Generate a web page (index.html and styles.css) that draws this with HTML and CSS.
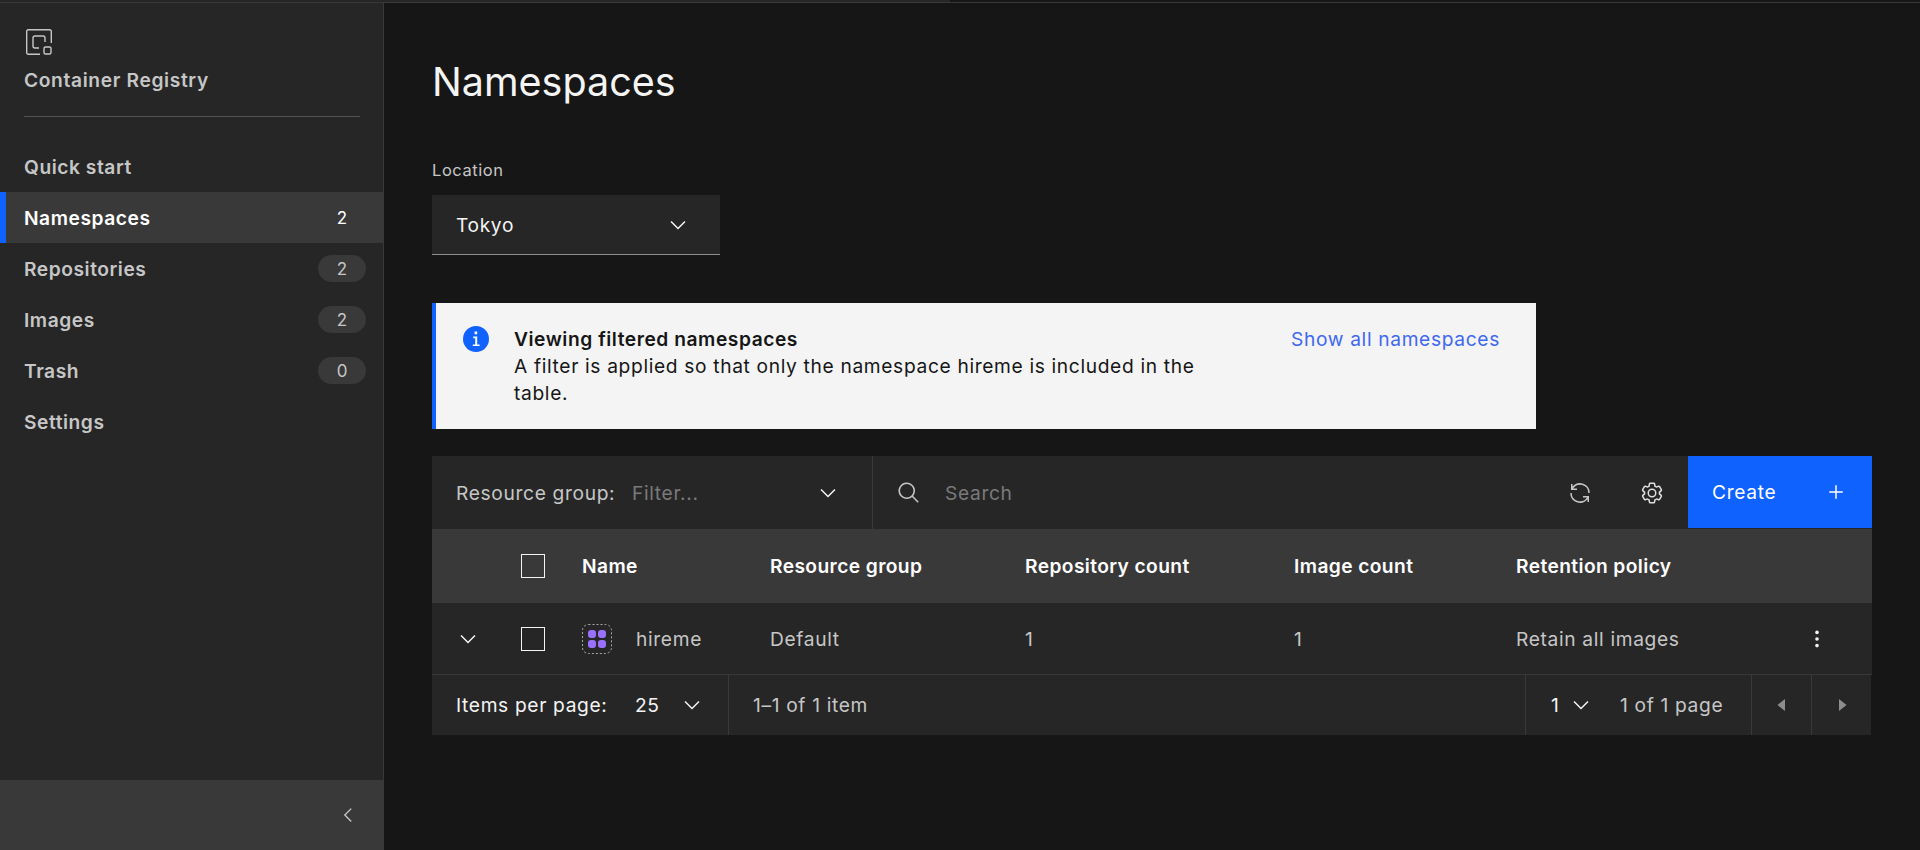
FILE: index.html
```html
<!DOCTYPE html>
<html lang="en">
<head>
<meta charset="utf-8">
<title>Namespaces</title>
<link rel="stylesheet" href="styles.css">
</head>
<body>
<div class="topline"><div class="topline-bar"></div></div>
<div class="app">
  <aside class="sidebar">
    <div class="brand">
      <svg class="brand-icon" viewBox="0 0 26 26" fill="none" stroke="#c6c6c6" stroke-width="1.4"><path d="M14 25.3H2.2a1.5 1.5 0 0 1-1.5-1.5V2.2A1.5 1.5 0 0 1 2.2.7h21.6a1.5 1.5 0 0 1 1.5 1.5V14"/><path d="M13 19H9a2 2 0 0 1-2-2V9a2 2 0 0 1 2-2h8a2 2 0 0 1 2 2v4"/><rect x="18" y="18" width="7" height="7" rx="1.5"/></svg>
      <div class="brand-name">Container Registry</div>
    </div>
    <nav class="nav">
      <a class="nav-item">Quick start</a>
      <a class="nav-item active">Namespaces<span class="badge plain">2</span></a>
      <a class="nav-item">Repositories<span class="badge">2</span></a>
      <a class="nav-item">Images<span class="badge">2</span></a>
      <a class="nav-item">Trash<span class="badge">0</span></a>
      <a class="nav-item">Settings</a>
    </nav>
    <div class="collapse">
      <svg class="icon-18" viewBox="0 0 32 32" fill="#c6c6c6"><path d="M10 16 20 6l1.4 1.4L12.8 16l8.6 8.6L20 26z"/></svg>
    </div>
  </aside>
  <main class="main">
    <h1 class="title">Namespaces</h1>
    <label class="field-label">Location</label>
    <div class="location">
      <span>Tokyo</span>
      <svg class="icon-20" viewBox="0 0 32 32" fill="#f4f4f4"><path d="M16 22 6 12l1.4-1.4 8.6 8.6 8.6-8.6L26 12z"/></svg>
    </div>
    <section class="notice">
      <svg class="notice-icon" viewBox="0 0 26 26"><circle cx="13" cy="13" r="13" fill="#0f62fe"/><path fill="#fff" d="M11.6 5.4h2.6v2.8h-2.6zM9.8 18.4h2.4v-6.2h-2v-1.6h4v7.8h2.4V20H9.8z"/></svg>
      <div class="notice-text">
        <strong>Viewing filtered namespaces</strong>
        <p>A filter is applied so that only the namespace hireme is included in the table.</p>
      </div>
      <a class="notice-link">Show all namespaces</a>
    </section>
    <section class="table">
      <div class="toolbar">
        <div class="rg-filter">
          <span class="rg-label">Resource group:</span>
          <span class="placeholder">Filter...</span>
          <svg class="icon-20 rg-chev" viewBox="0 0 32 32" fill="#f4f4f4"><path d="M16 22 6 12l1.4-1.4 8.6 8.6 8.6-8.6L26 12z"/></svg>
        </div>
        <div class="search">
          <svg class="icon-22" viewBox="0 0 32 32" fill="#c6c6c6"><path d="m29 27.586-7.552-7.552a11.018 11.018 0 1 0-1.414 1.414L27.586 29ZM4 13a9 9 0 1 1 9 9 9.01 9.01 0 0 1-9-9Z"/></svg>
          <span class="placeholder">Search</span>
        </div>
        <div class="tool">
          <svg class="icon-22" viewBox="0 0 32 32" fill="#c6c6c6"><path d="M12 10H6.78A11 11 0 0 1 27 16h2A13 13 0 0 0 6 7.68V4H4v8h8zM20 22h5.22A11 11 0 0 1 5 16H3a13 13 0 0 0 23 8.32V28h2V20H20z"/></svg>
        </div>
        <div class="tool">
          <svg class="icon-22" viewBox="0 0 32 32" fill="#e0e0e0"><path d="M27 16.76v-1.53l1.92-1.68A2 2 0 0 0 29.3 11L27 7a2 2 0 0 0-1.73-1 2 2 0 0 0-.64.1l-2.43.82a11.35 11.35 0 0 0-1.31-.75l-.51-2.52a2 2 0 0 0-2-1.61h-4.76a2 2 0 0 0-2 1.61l-.51 2.52a11.48 11.48 0 0 0-1.32.75L7.43 6.06A2 2 0 0 0 6.79 6 2 2 0 0 0 5 7l-2.3 4a2 2 0 0 0 .41 2.51L5 15.24v1.53l-1.89 1.68A2 2 0 0 0 2.7 21L5 25a2 2 0 0 0 1.73 1 2 2 0 0 0 .64-.1l2.43-.82a11.35 11.35 0 0 0 1.31.75l.51 2.52a2 2 0 0 0 2 1.61h4.72a2 2 0 0 0 2-1.61l.51-2.52a11.48 11.48 0 0 0 1.32-.75l2.42.82a2 2 0 0 0 .64.1 2 2 0 0 0 1.73-1l2.34-4a2 2 0 0 0-.41-2.51ZM25.23 24l-3.43-1.16a8.86 8.86 0 0 1-2.71 1.57L18.38 28h-4.74l-.71-3.55a9.36 9.36 0 0 1-2.7-1.57L6.79 24l-2.37-4 2.72-2.4a8.9 8.9 0 0 1 0-3.13L4.42 12l2.37-4 3.43 1.16a8.86 8.86 0 0 1 2.71-1.57L13.64 4h4.72l.71 3.55a9.36 9.36 0 0 1 2.7 1.57L25.23 8l2.37 4-2.72 2.4a8.9 8.9 0 0 1 0 3.13L27.6 20Z"/><path d="M16 22a6 6 0 1 1 6-6 5.94 5.94 0 0 1-6 6Zm0-10a3.91 3.91 0 0 0-4 4 3.91 3.91 0 0 0 4 4 3.91 3.91 0 0 0 4-4 3.91 3.91 0 0 0-4-4Z"/></svg>
        </div>
        <button class="create"><span>Create</span><svg class="icon-20" viewBox="0 0 32 32" fill="#fff"><path d="M17 15V7h-2v8H7v2h8v8h2v-8h8v-2z"/></svg></button>
      </div>
      <div class="grid head">
        <div></div>
        <div class="check"></div>
        <div>Name</div>
        <div>Resource group</div>
        <div>Repository count</div>
        <div>Image count</div>
        <div>Retention policy</div>
        <div></div>
      </div>
      <div class="grid row">
        <div class="chev-cell"><svg class="icon-20" viewBox="0 0 32 32" fill="#f4f4f4"><path d="M16 22 6 12l1.4-1.4 8.6 8.6 8.6-8.6L26 12z"/></svg></div>
        <div class="check"></div>
        <div class="name-cell">
          <svg class="ns-icon" viewBox="0 0 30 30"><rect x=".5" y=".5" width="29" height="29" rx="6" fill="none" stroke="#a8a8a8" stroke-dasharray="2 2"/><g fill="#9a70ff"><rect x="6" y="6" width="8" height="8" rx="3"/><rect x="16" y="6" width="8" height="8" rx="3"/><rect x="6" y="16" width="8" height="8" rx="3"/><rect x="16" y="16" width="8" height="8" rx="3"/></g></svg>
          <span>hireme</span>
        </div>
        <div>Default</div>
        <div>1</div>
        <div>1</div>
        <div>Retain all images</div>
        <div class="dots"><svg class="icon-20" viewBox="0 0 20 20" fill="#f4f4f4"><circle cx="10" cy="4.5" r="1.5"/><circle cx="10" cy="10" r="1.5"/><circle cx="10" cy="15.5" r="1.5"/></svg></div>
      </div>
      <div class="pager">
        <div class="pager-left">
          <span class="ipp">Items per page:</span>
          <span class="val val-size">25</span>
          <svg class="icon-20" viewBox="0 0 32 32" fill="#f4f4f4"><path d="M16 22 6 12l1.4-1.4 8.6 8.6 8.6-8.6L26 12z"/></svg>
        </div>
        <div class="pager-range">1–1 of 1 item</div>
        <div class="pager-pages">
          <span class="val val-page">1</span>
          <svg class="icon-20" viewBox="0 0 32 32" fill="#f4f4f4"><path d="M16 22 6 12l1.4-1.4 8.6 8.6 8.6-8.6L26 12z"/></svg>
          <span class="of">1 of 1 page</span>
        </div>
        <div class="pager-btn"><svg class="icon-20" viewBox="0 0 32 32" fill="#8d8d8d"><path d="M20 24 10 16l10-8z"/></svg></div>
        <div class="pager-btn"><svg class="icon-20" viewBox="0 0 32 32" fill="#8d8d8d"><path d="m12 8 10 8-10 8z"/></svg></div>
      </div>
    </section>
  </main>
</div>
</body>
</html>
```
FILE: styles.css
```css
* { box-sizing: border-box; }
html, body { margin: 0; height: 100%; }
body {
  background: #161616;
  color: #c6c6c6;
  font-family: Inter, "Noto Sans", "Liberation Sans", sans-serif;
  font-size: 19.2px;
  letter-spacing: 0.65px;
  overflow: hidden;
}
svg { display: block; flex: none; }
.icon-18 { width: 22px; height: 22px; }
.icon-20 { width: 24px; height: 24px; }
.icon-22 { width: 24px; height: 24px; }
.topline { height: 3px; background: #161616; border-bottom: 1px solid #393939; }
.topline-bar { width: 950px; height: 2px; background: #262626; }
.app { display: flex; height: 847px; }
.sidebar {
  width: 384px;
  flex: none;
  background: #262626;
  border-right: 1px solid #393939;
  display: flex;
  flex-direction: column;
}
.brand { padding: 26px 24px 0; height: 113px; }
.brand-icon { width: 26px; height: 26px; margin-left: 2px; }
.brand-name { font-weight: 600; line-height: 26px; margin-top: 12px; padding-bottom: 23px; border-bottom: 1px solid #525252; width: 336px; }
.nav { padding-top: 25px; flex: 1; }
.nav-item {
  display: flex;
  align-items: center;
  justify-content: space-between;
  height: 51px;
  padding: 0 17px 0 24px;
  font-weight: 600;
  letter-spacing: 0.55px;
}
.nav-item.active {
  background: #393939;
  color: #fff;
  border-left: 6px solid #0f62fe;
  padding-left: 18px;
}
.badge {
  width: 48px; height: 27px;
  border-radius: 14px;
  background: #393939;
  font-weight: 400;
  font-size: 17px;
  letter-spacing: 0;
  display: flex; align-items: center; justify-content: center;
}
.badge.plain { background: transparent; }
.collapse {
  height: 70px;
  margin-right: -1px;
  background: #393939;
  display: flex; align-items: center; justify-content: flex-end;
  padding-right: 25px;
}
.main { flex: 1; padding: 0 48px; min-width: 0; }
.title { margin: 0; font-size: 39.5px; font-weight: 400; letter-spacing: 0; line-height: 56px; color: #f4f4f4; padding-top: 51px; height: 156px; }
.field-label { display: block; font-size: 16.5px; line-height: 22px; letter-spacing: 0.55px; }
.location {
  width: 288px; height: 60px; margin: 14px 0 0;
  background: #262626;
  border-bottom: 1px solid #8d8d8d;
  color: #f4f4f4;
  display: flex; align-items: center; justify-content: space-between;
  padding: 0 30px 0 24px;
}
.notice {
  width: 1104px; height: 126px; margin-top: 48px;
  background: #f4f4f4;
  border-left: 4px solid #0f62fe;
  color: #161616;
  display: flex;
  padding: 23px 0 0 27px;
}
.notice-icon { width: 26px; height: 26px; }
.notice-text { width: 690px; margin-left: 25px; line-height: 27px; }
.notice-text strong { font-weight: 600; display: block; letter-spacing: 0.55px; }
.notice-text p { margin: 0; }
.notice-link { color: #4068f0; margin-left: 87px; line-height: 27px; }
.table { margin-top: 27px; }
.toolbar { display: flex; height: 73px; background: #262626; }
.rg-filter {
  width: 441px; flex: none;
  display: flex; align-items: center;
  padding: 0 32px 0 24px;
  border-right: 1px solid #393939;
}
.placeholder { color: #7a7a7a; }
.rg-label { width: 176px; flex: none; white-space: nowrap; }
.rg-chev { margin-left: auto; }
.search { flex: 1; display: flex; align-items: center; gap: 24px; padding-left: 24px; }
.tool { width: 72px; display: flex; align-items: center; justify-content: center; }
.create {
  width: 184px; height: 72px; border: 0; margin: 0;
  background: #0f62fe; color: #fff;
  font: inherit;
  letter-spacing: inherit;
  display: flex; align-items: center; justify-content: space-between;
  padding: 0 24px;
}
.grid {
  display: grid;
  grid-template-columns: 89px 61px 188px 255px 269px 222px 1fr 72px;
  align-items: center;
}
.head { height: 74px; background: #393939; color: #fff; font-weight: 600; letter-spacing: 0.4px; }
.row { height: 72px; background: #262626; border-bottom: 1px solid #393939; }
.check { width: 24px; height: 24px; border: 1px solid #f4f4f4; }
.chev-cell { padding-left: 24px; }
.name-cell { display: flex; align-items: center; gap: 24px; }
.ns-icon { width: 30px; height: 30px; }
.dots { padding-left: 5px; }
.pager {
  display: flex; height: 60px; width: 1439px;
  background: #262626;
  align-items: stretch;
}
.pager > div { display: flex; align-items: center; }
.val { color: #f4f4f4; }
.val-size { width: 45px; flex: none; }
.val-page { width: 18px; flex: none; }
.ipp { color: #f4f4f4; width: 179px; flex: none; white-space: nowrap; }
.pager-left { width: 297px; padding-left: 24px; border-right: 1px solid #393939; }
.pager-range { flex: 1; padding-left: 24px; }
.pager-pages { width: 226px; padding-left: 25px; border-left: 1px solid #393939; }
.of { margin-left: 27px; }
.pager-btn { width: 60px; justify-content: center; border-left: 1px solid #393939; }
```
